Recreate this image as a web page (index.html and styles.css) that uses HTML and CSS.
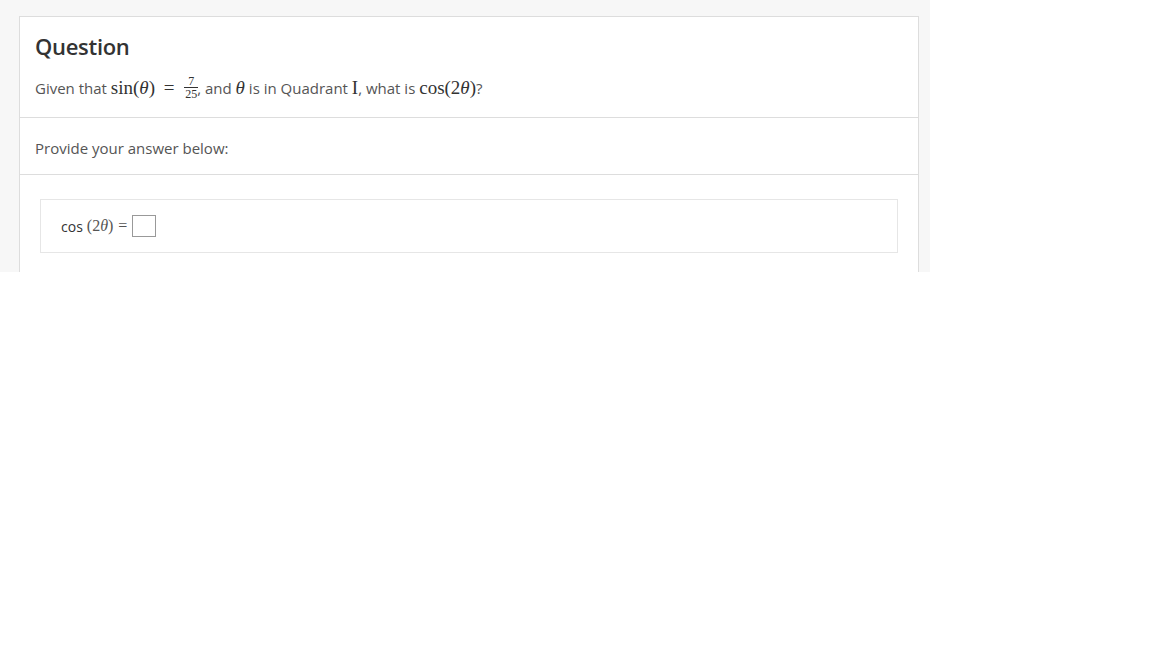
FILE: index.html
```html
<!DOCTYPE html>
<html lang="en">
<head>
    <meta charset="UTF-8">
    <title>Question</title>
    <link rel="stylesheet" href="styles.css">
</head>
<body>
    <div class="frame">
        <div class="card">
            <div class="section question">
                <h2 class="title">Question</h2>
                <p class="prompt">
                    Given that
                    <span class="math">sin(<i>θ</i>) <span class="op">=</span>
                        <span class="frac"><span class="num">7</span><span class="den">25</span></span></span>, and
                    <span class="math"><i>θ</i></span> is in Quadrant <span class="math">I</span>, what is
                    <span class="math">cos(2<i>θ</i>)</span>?
                </p>
            </div>
            <div class="section hint">
                Provide your answer below:
            </div>
            <div class="section answer">
                <div class="answer-box">
                    <span class="fn">cos</span>
                    <span class="math small">(2<i>θ</i>)</span>
                    <span class="math small eq">=</span>
                    <span class="input"></span>
                </div>
            </div>
        </div>
    </div>
</body>
</html>
```

FILE: styles.css
```css
body {
    margin: 0;
    background: #fff;
    font-family: "Open Sans", "Noto Sans", sans-serif;
    color: #555;
}
.frame {
    width: 930px;
    height: 272px;
    box-sizing: border-box;
    padding: 16px 11px 0 19px;
    background: #f7f7f7;
}
.card {
    height: 100%;
    box-sizing: border-box;
    background: #fff;
    border: 1px solid #ddd;
    border-bottom: none;
}
.section {
    padding: 0 15px;
    border-bottom: 1px solid #ddd;
}
.question {
    height: 101px;
    box-sizing: border-box;
    padding-top: 15px;
}
.title {
    margin: 0;
    font-size: 22px;
    font-weight: 600;
    color: #333;
    line-height: 28px;
    letter-spacing: -0.3px;
}
.prompt {
    margin: 15px 0 0;
    font-size: 15px;
    line-height: 26px;
}
.math {
    font-family: "Liberation Serif", "DejaVu Serif", serif;
    font-size: 19px;
    color: #333;
}
.math i {
    font-style: italic;
}
.op {
    margin: 0 4px;
}
.frac {
    display: inline-flex;
    flex-direction: column;
    align-items: center;
    vertical-align: middle;
    font-size: 12px;
    line-height: 10px;
    position: relative;
    top: -2px;
    margin-left: 2px;
}
.num {
    border-bottom: 1px solid #333;
    padding: 0 1px 1px;
    width: 100%;
    text-align: center;
}
.den {
    padding-top: 1px;
}
.hint {
    height: 57px;
    display: flex;
    align-items: center;
    font-size: 15px;
    padding-top: 3px;
    box-sizing: border-box;
}
.answer {
    border-bottom: none;
    padding: 24px 20px 0;
}
.answer-box {
    height: 54px;
    box-sizing: border-box;
    border: 1px solid #e6e6e6;
    display: flex;
    align-items: center;
    padding: 0 20px;
    gap: 4px;
    font-size: 14px;
    color: #333;
}
.math.small {
    font-size: 16px;
    color: #555;
}
.eq {
    color: #aaa;
    margin-left: 1px;
}
.input {
    width: 22px;
    height: 20px;
    border: 1px solid #999;
    margin-left: 1px;
}
```
